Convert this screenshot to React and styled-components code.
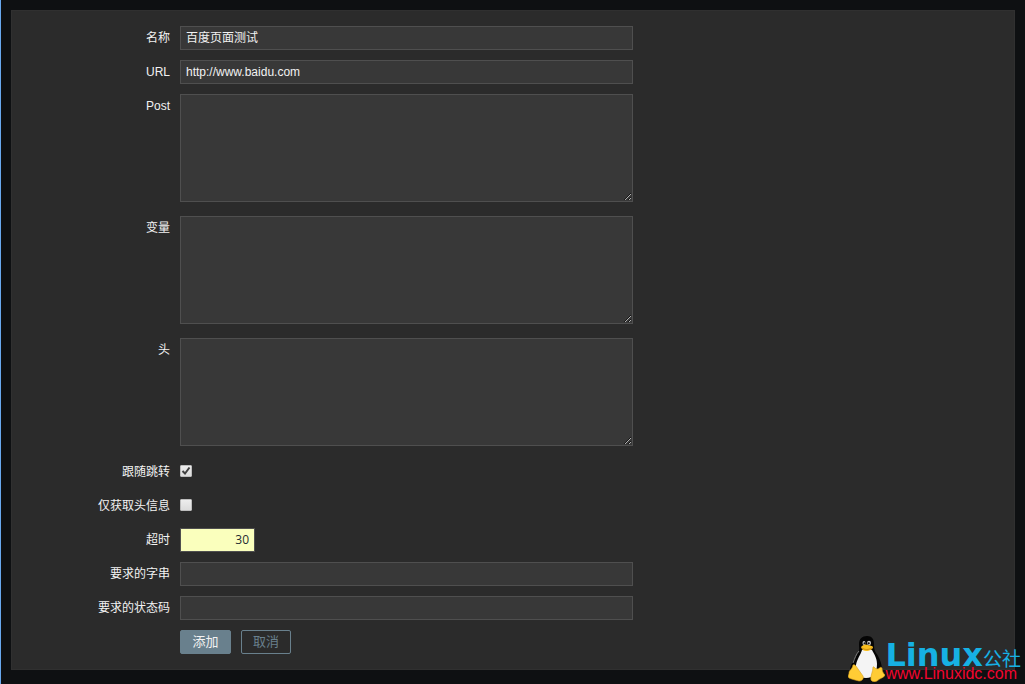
import React from "react";
import styled, { createGlobalStyle, css } from "styled-components";

const GlobalStyle = createGlobalStyle`
  * { box-sizing: border-box; }
  html { min-height: 100%; background: #0e1012; }
  body {
    margin: 0;
    min-height: 100vh;
    border-left: 1px solid #69a9ef;
    color: #f2f2f2;
    font: 12px/24px "Liberation Sans", "Noto Sans CJK SC", sans-serif;
  }
`;

const Page = styled.div`
  position: relative;
  min-height: 100vh;
  padding: 10px;
`;

const Panel = styled.form`
  display: flex;
  flex-direction: column;
  gap: 10px;
  padding: 15px 10px 15px 0;
  background: #2b2b2b;
  border: 1px solid #303030;
`;

const Row = styled.div`
  display: grid;
  grid-template-columns: 158px minmax(0, 453px);
  column-gap: 10px;
  align-items: start;
`;

const Label = styled.label`
  text-align: right;
  white-space: nowrap;
`;

const field = css`
  display: block;
  width: 100%;
  margin: 0;
  padding: 0 5px;
  color: #f2f2f2;
  background: #383838;
  border: 1px solid #4f4f4f;
  border-radius: 0;
  font: inherit;
  outline: none;
`;

const TextInput = styled.input`
  ${field}
  height: 24px;
`;

const NumberInput = styled(TextInput)`
  width: 75px;
  color: #1f2c33;
  background: #faffbd;
  font-family: "Open Sans", sans-serif;
  text-align: right;
`;

const TextArea = styled.textarea`
  ${field}
  height: 108px;
  margin-bottom: 4px;
  resize: vertical;
`;

const CheckCell = styled.div`
  display: grid;
  grid-template-columns: 12px;
  align-content: center;
  height: 22px;
`;

const CheckInput = styled.input`
  grid-area: 1 / 1;
  appearance: none;
  width: 12px;
  height: 12px;
  margin: 0;
  border: 1px solid #bdbdbd;
  border-radius: 1px;
  background: linear-gradient(#ededed, #dcdcdc);

  &:not(:checked) + svg { display: none; }
`;

const CheckMark = styled.svg`
  grid-area: 1 / 1;
  width: 12px;
  height: 12px;
  pointer-events: none;
`;

const Actions = styled.div`
  grid-column: 2;
  display: flex;
  gap: 10px;
`;

const Button = styled.button`
  height: 24px;
  padding: 0 11px;
  min-width: ${(p) => (p.$primary ? "51px" : "50px")};
  border: 1px solid #69808d;
  border-radius: 2px;
  color: ${(p) => (p.$primary ? "#f2f2f2" : "#69808d")};
  background: ${(p) => (p.$primary ? "#69808d" : "transparent")};
  font: 13px/22px "Liberation Sans", "Noto Sans CJK SC", sans-serif;
  cursor: pointer;
`;

const Watermark = styled.div`
  position: absolute;
  right: 4px;
  bottom: 2px;
  display: flex;
  align-items: flex-end;
  pointer-events: none;
`;

const BrandText = styled.div`
  display: flex;
  flex-direction: column;
`;

const BrandName = styled.div`
  display: flex;
  align-items: baseline;
  color: #16b1e4;
  font: bold 32px/16px "DejaVu Sans", sans-serif;
`;

const BrandSuffix = styled.span`
  font: 19px/16px "Noto Sans CJK SC", sans-serif;
`;

const BrandUrl = styled.div`
  color: #f2052f;
  font: 16px/16px "Liberation Sans", sans-serif;
`;

function Penguin() {
  return (
    <svg width="37" height="46" viewBox="0 0 37 46" aria-hidden="true">
      <path d="M19 0C14 0 11 3 11 8c0 5 1 7-2 11-3 5-7 10-7 16 0 5 5 8 9 8h16c4 0 7-3 7-9 0-7-3-13-6-17-2-3-2-6-2-9 0-5-2-8-7-8Z" fill="#050505" />
      <path d="M14 14c-1 4-5 9-6 15-1 8 3 13 10 13 8 0 11-6 11-14 0-6-3-10-5-14Z" fill="#f4f4f4" />
      <path d="M11 15c-3 3-4 7-6 12" fill="none" stroke="#777" strokeWidth="1" />
      <ellipse cx="16" cy="7" rx="1.5" ry="2" fill="#ccc" />
      <ellipse cx="21" cy="7" rx="2" ry="2.2" fill="#ccc" />
      <circle cx="16.5" cy="7.3" r="1" fill="#111" />
      <circle cx="20.7" cy="7.3" r="1.1" fill="#111" />
      <path d="M13 11c2-2 4-3 6-2 2 0 6 1 6 2 0 2-3 4-7 4-2 0-4-1-5-4Z" fill="#f9bf20" />
      <path d="M14 12c3 2 6 2 10 0" fill="none" stroke="#b8790a" strokeWidth="0.7" />
      <path d="M5 29c2-1 3 1 5 4l5 7c1 3-1 5-4 5-4-1-8-2-10-3-2-2 0-3 0-5 0-3 3-3 4-8Z" fill="#ffcc35" stroke="#d9a01c" strokeWidth="0.6" />
      <path d="M25 31c1-1 2 2 4 2 3 0 3-3 5-1 0 3 1 5 3 7-1 3-5 3-8 6-2 1-5 1-6-1-1-4 2-8 2-13Z" fill="#ffcc35" stroke="#d9a01c" strokeWidth="0.6" />
    </svg>
  );
}

function TextRow({ id, label, value }) {
  return (
    <Row>
      <Label htmlFor={id}>{label}</Label>
      <TextInput id={id} type="text" defaultValue={value} />
    </Row>
  );
}

function AreaRow({ id, label }) {
  return (
    <Row>
      <Label htmlFor={id}>{label}</Label>
      <TextArea id={id} />
    </Row>
  );
}

function CheckRow({ id, label, checked }) {
  return (
    <Row>
      <Label htmlFor={id}>{label}</Label>
      <CheckCell>
        <CheckInput id={id} type="checkbox" defaultChecked={checked} />
        <CheckMark viewBox="0 0 12 12" aria-hidden="true">
          <path d="M2.5 6l2.5 2.5 4.5-6" fill="none" stroke="#414141" strokeWidth="2" />
        </CheckMark>
      </CheckCell>
    </Row>
  );
}

export default function App() {
  return (
    <>
      <GlobalStyle />
      <Page>
        <Panel onSubmit={(e) => e.preventDefault()}>
          <TextRow id="name" label="名称" value="百度页面测试" />
          <TextRow id="url" label="URL" value="http://www.baidu.com" />
          <AreaRow id="post" label="Post" />
          <AreaRow id="variables" label="变量" />
          <AreaRow id="headers" label="头" />
          <CheckRow id="follow" label="跟随跳转" checked />
          <CheckRow id="headersOnly" label="仅获取头信息" />
          <Row>
            <Label htmlFor="timeout">超时</Label>
            <NumberInput id="timeout" type="text" inputMode="numeric" defaultValue="30" />
          </Row>
          <TextRow id="required" label="要求的字串" />
          <TextRow id="status" label="要求的状态码" />
          <Row>
            <Actions>
              <Button type="submit" $primary>添加</Button>
              <Button type="button">取消</Button>
            </Actions>
          </Row>
        </Panel>
        <Watermark>
          <Penguin />
          <BrandText>
            <BrandName>
              Linux<BrandSuffix>公社</BrandSuffix>
            </BrandName>
            <BrandUrl>www.Linuxidc.com</BrandUrl>
          </BrandText>
        </Watermark>
      </Page>
    </>
  );
}
